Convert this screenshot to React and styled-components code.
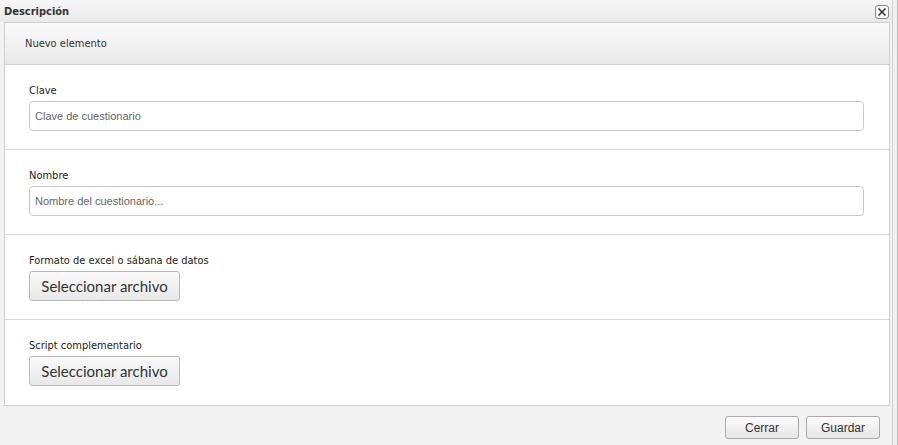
import React from 'react'
import styled, { createGlobalStyle } from 'styled-components'

const Global = createGlobalStyle`
  html, body {
    margin: 0;
    padding: 0;
    background: #e9e9e9;
  }
  body {
    font-family: "DejaVu Sans Condensed", "Liberation Sans", Tahoma, sans-serif;
  }
`

const Page = styled.div`
  width: 898px;
  height: 445px;
  display: flex;
  background: #dedede;
`

const Dialog = styled.div`
  width: 893px;
  height: 445px;
  background: #f2f2f2;
  border-right: 1px solid #cfcfcf;
  display: flex;
  flex-direction: column;
  box-sizing: border-box;
`

const TitleBar = styled.div`
  height: 22px;
  display: flex;
  align-items: center;
  justify-content: space-between;
  padding: 0 3px 0 4px;
  background: linear-gradient(#f7f7f7, #e9e9e9);
  flex-shrink: 0;
`

const Title = styled.span`
  font-family: "DejaVu Sans Condensed", "Liberation Sans", Tahoma, sans-serif;
  font-size: 11px;
  font-weight: bold;
  color: #333;
`

const CloseBtn = styled.button`
  width: 14px;
  height: 14px;
  padding: 0;
  margin-top: 2px;
  border: 1px solid #8a8a8a;
  border-radius: 3px;
  background: #f6f6f6;
  display: flex;
  align-items: center;
  justify-content: center;
`

const Panel = styled.div`
  margin: 0 2px 0 4px;
  border: 1px solid #cfcfcf;
  background: #fff;
  display: flex;
  flex-direction: column;
  box-sizing: border-box;
`

const PanelHeader = styled.div`
  height: 41px;
  display: flex;
  align-items: center;
  padding-left: 20px;
  background: linear-gradient(#f9f9f9, #e9e9e9);
  border-bottom: 1px solid #d4d4d4;
  font-family: "DejaVu Sans Condensed", "Liberation Sans", Tahoma, sans-serif;
  font-size: 11px;
  color: #333;
`

const Field = styled.div`
  height: 85px;
  box-sizing: border-box;
  padding: 19px 25px 0 24px;
  display: flex;
  flex-direction: column;
  align-items: flex-start;
  border-bottom: ${p => (p.$last ? 'none' : '1px solid #d9d9d9')};
`

const Label = styled.label`
  font-family: "DejaVu Sans Condensed", "Liberation Sans", Tahoma, sans-serif;
  font-size: 11px;
  color: #222;
  line-height: 13px;
  margin-bottom: 4px;
`

const Input = styled.input`
  width: 100%;
  height: 30px;
  box-sizing: border-box;
  border: 1px solid #c8c8c8;
  border-radius: 4px;
  padding: 0 5px;
  font-family: "Liberation Sans", Arial, sans-serif;
  font-size: 11px;
  color: #555;
  outline: none;
  &::placeholder {
    color: #666;
  }
`

const FileButton = styled.button`
  height: 30px;
  width: 151px;
  border: 1px solid #b9b9b9;
  border-radius: 3px;
  background: linear-gradient(#fafafa, #e8e8e8);
  font-family: "Lato", "Open Sans", sans-serif;
  font-size: 15px;
  color: #333;
  padding: 0;
`

const Footer = styled.div`
  flex: 1;
  display: flex;
  align-items: center;
  justify-content: flex-end;
  gap: 7px;
  padding: 4px 12px 0 0;
`

const FooterButton = styled.button`
  width: 74px;
  height: 23px;
  border: 1px solid #aaa;
  border-radius: 3px;
  background: linear-gradient(#fbfbfb, #e6e6e6);
  font-family: "Liberation Sans", Arial, sans-serif;
  font-size: 12px;
  color: #333;
  padding: 0;
`

const Strip = styled.div`
  flex: 1;
  background: #f0f0f0;
  border-right: 1px solid #b8b8b8;
`

const CloseIcon = () => (
  <svg width="10" height="10" viewBox="0 0 10 10">
    <path d="M1.5 1.5 L8.5 8.5 M8.5 1.5 L1.5 8.5" stroke="#333" strokeWidth="1.5" />
  </svg>
)

const App = () => {
  return (
    <>
      <Global />
      <Page>
        <Dialog>
          <TitleBar>
            <Title>Descripción</Title>
            <CloseBtn aria-label="Cerrar"><CloseIcon /></CloseBtn>
          </TitleBar>
          <Panel>
            <PanelHeader>Nuevo elemento</PanelHeader>
            <Field>
              <Label>Clave</Label>
              <Input placeholder="Clave de cuestionario" />
            </Field>
            <Field>
              <Label>Nombre</Label>
              <Input placeholder="Nombre del cuestionario..." />
            </Field>
            <Field>
              <Label>Formato de excel o sábana de datos</Label>
              <FileButton>Seleccionar archivo</FileButton>
            </Field>
            <Field $last>
              <Label>Script complementario</Label>
              <FileButton>Seleccionar archivo</FileButton>
            </Field>
          </Panel>
          <Footer>
            <FooterButton>Cerrar</FooterButton>
            <FooterButton>Guardar</FooterButton>
          </Footer>
        </Dialog>
        <Strip />
      </Page>
    </>
  )
}

export default App
